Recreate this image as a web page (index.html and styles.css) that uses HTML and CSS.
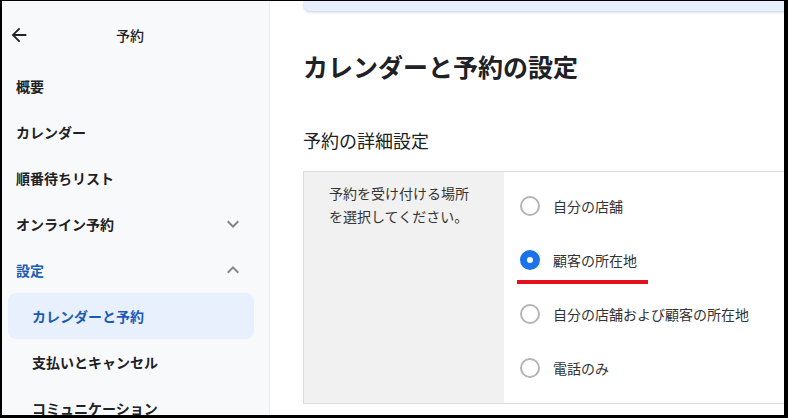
FILE: index.html
```html
<!DOCTYPE html>
<html lang="ja">
<head>
<meta charset="utf-8">
<link rel="stylesheet" href="styles.css">
</head>
<body>
<div class="frame">
  <aside class="sidebar">
    <div class="side-head">
      <svg class="back" viewBox="0 0 24 24" width="22" height="22"><path d="M20 11H7.83l5.59-5.59L12 4l-8 8 8 8 1.41-1.41L7.83 13H20v-2z" fill="#202124"/></svg>
      <span class="side-title">予約</span>
    </div>
    <nav class="menu">
      <div class="item">概要</div>
      <div class="item">カレンダー</div>
      <div class="item">順番待ちリスト</div>
      <div class="item has-chev"><span>オンライン予約</span>
        <svg class="chev" viewBox="0 0 24 24" width="24" height="24"><path d="M16.59 8.59L12 13.17 7.41 8.59 6 10l6 6 6-6z"/></svg></div>
      <div class="item has-chev blue"><span>設定</span>
        <svg class="chev" viewBox="0 0 24 24" width="24" height="24"><path d="M12 8l-6 6 1.41 1.41L12 10.83l4.59 4.58L18 14z"/></svg></div>
      <div class="item sub active">カレンダーと予約</div>
      <div class="item sub">支払いとキャンセル</div>
      <div class="item sub">コミュニケーション</div>
    </nav>
  </aside>
  <main class="main">
    <div class="content">
      <div class="top-card"></div>
      <h1 class="title">カレンダーと予約の設定</h1>
      <h2 class="subtitle">予約の詳細設定</h2>
      <div class="table">
        <div class="label-col">予約を受け付ける場所<br>を選択してください。</div>
        <div class="options">
          <div class="opt"><span class="radio"></span><span class="opt-text">自分の店舗</span></div>
          <div class="opt"><span class="radio checked"></span><span class="opt-text">顧客の所在地</span><span class="mark"></span></div>
          <div class="opt"><span class="radio"></span><span class="opt-text">自分の店舗および顧客の所在地</span></div>
          <div class="opt"><span class="radio"></span><span class="opt-text">電話のみ</span></div>
        </div>
      </div>
    </div>
  </main>
</div>
</body>
</html>
```
FILE: styles.css
```css
html, body {
  margin: 0;
  padding: 0;
  background: #fff;
}
body {
  font-family: "Noto Sans CJK JP", "Noto Sans", sans-serif;
  color: #202124;
}
.frame {
  width: 788px;
  height: 418px;
  box-sizing: border-box;
  border-style: solid;
  border-color: #000;
  border-width: 1px 4px 3px 2px;
  display: flex;
  overflow: hidden;
}
.sidebar {
  width: 267px;
  flex: none;
  background: #f8f9fa;
  border-right: 1px solid #eceef0;
}
.side-head {
  height: 62px;
  display: flex;
  align-items: center;
  padding-top: 6px;
  box-sizing: border-box;
}
.back {
  margin-left: 6px;
  flex: none;
}
.side-title {
  margin-left: 86px;
  font-size: 14px;
  font-weight: 500;
}
.menu {
  display: flex;
  flex-direction: column;
}
.item {
  height: 46px;
  display: flex;
  align-items: center;
  justify-content: space-between;
  padding: 0 24px 0 14px;
  font-size: 14px;
  font-weight: 700;
  color: #202124;
}
.item.blue {
  color: #1a5bb5;
}
.chev {
  fill: #80868b;
  flex: none;
}
.item.sub {
  margin: 0 15px 0 6px;
  padding-left: 24px;
  border-radius: 8px;
}
.item.active {
  background: #e8f0fe;
  color: #1a5bb5;
}
.main {
  flex: 1;
  overflow: hidden;
  padding-left: 33px;
}
.content {
  width: 540px;
}
.top-card {
  height: 10px;
  background: #e8f0fe;
  border-bottom: 1px solid #d2e1f6;
  border-radius: 0 0 8px 8px;
  box-shadow: 0 1px 2px rgba(60, 64, 67, 0.15);
}
.title {
  margin: 38px 0 0;
  font-size: 25px;
  line-height: 32px;
  font-weight: 700;
  color: #202124;
}
.subtitle {
  margin: 46px 0 0;
  font-size: 18px;
  line-height: 24px;
  font-weight: 400;
  color: #202124;
}
.table {
  margin-top: 19px;
  display: flex;
  border: 1px solid #dadce0;
}
.label-col {
  width: 200px;
  box-sizing: border-box;
  flex: none;
  background: #f1f1f1;
  padding: 10px 25px;
  font-size: 14px;
  line-height: 23px;
  color: #333;
}
.options {
  padding: 7px 0 8px 16px;
}
.opt {
  position: relative;
  height: 54px;
  display: flex;
  align-items: center;
}
.radio {
  width: 20px;
  height: 20px;
  box-sizing: border-box;
  border: 2px solid #b5b5b5;
  border-radius: 50%;
  flex: none;
}
.radio.checked {
  border-color: #1a73e8;
  background: #1a73e8;
  display: flex;
  align-items: center;
  justify-content: center;
}
.radio.checked::after {
  content: "";
  width: 6px;
  height: 6px;
  border-radius: 50%;
  background: #fff;
}
.opt-text {
  margin-left: 13px;
  font-size: 14px;
  color: #333;
}
.mark {
  position: absolute;
  left: -3px;
  top: 47px;
  width: 131px;
  height: 4px;
  background: #e3111b;
}
```
